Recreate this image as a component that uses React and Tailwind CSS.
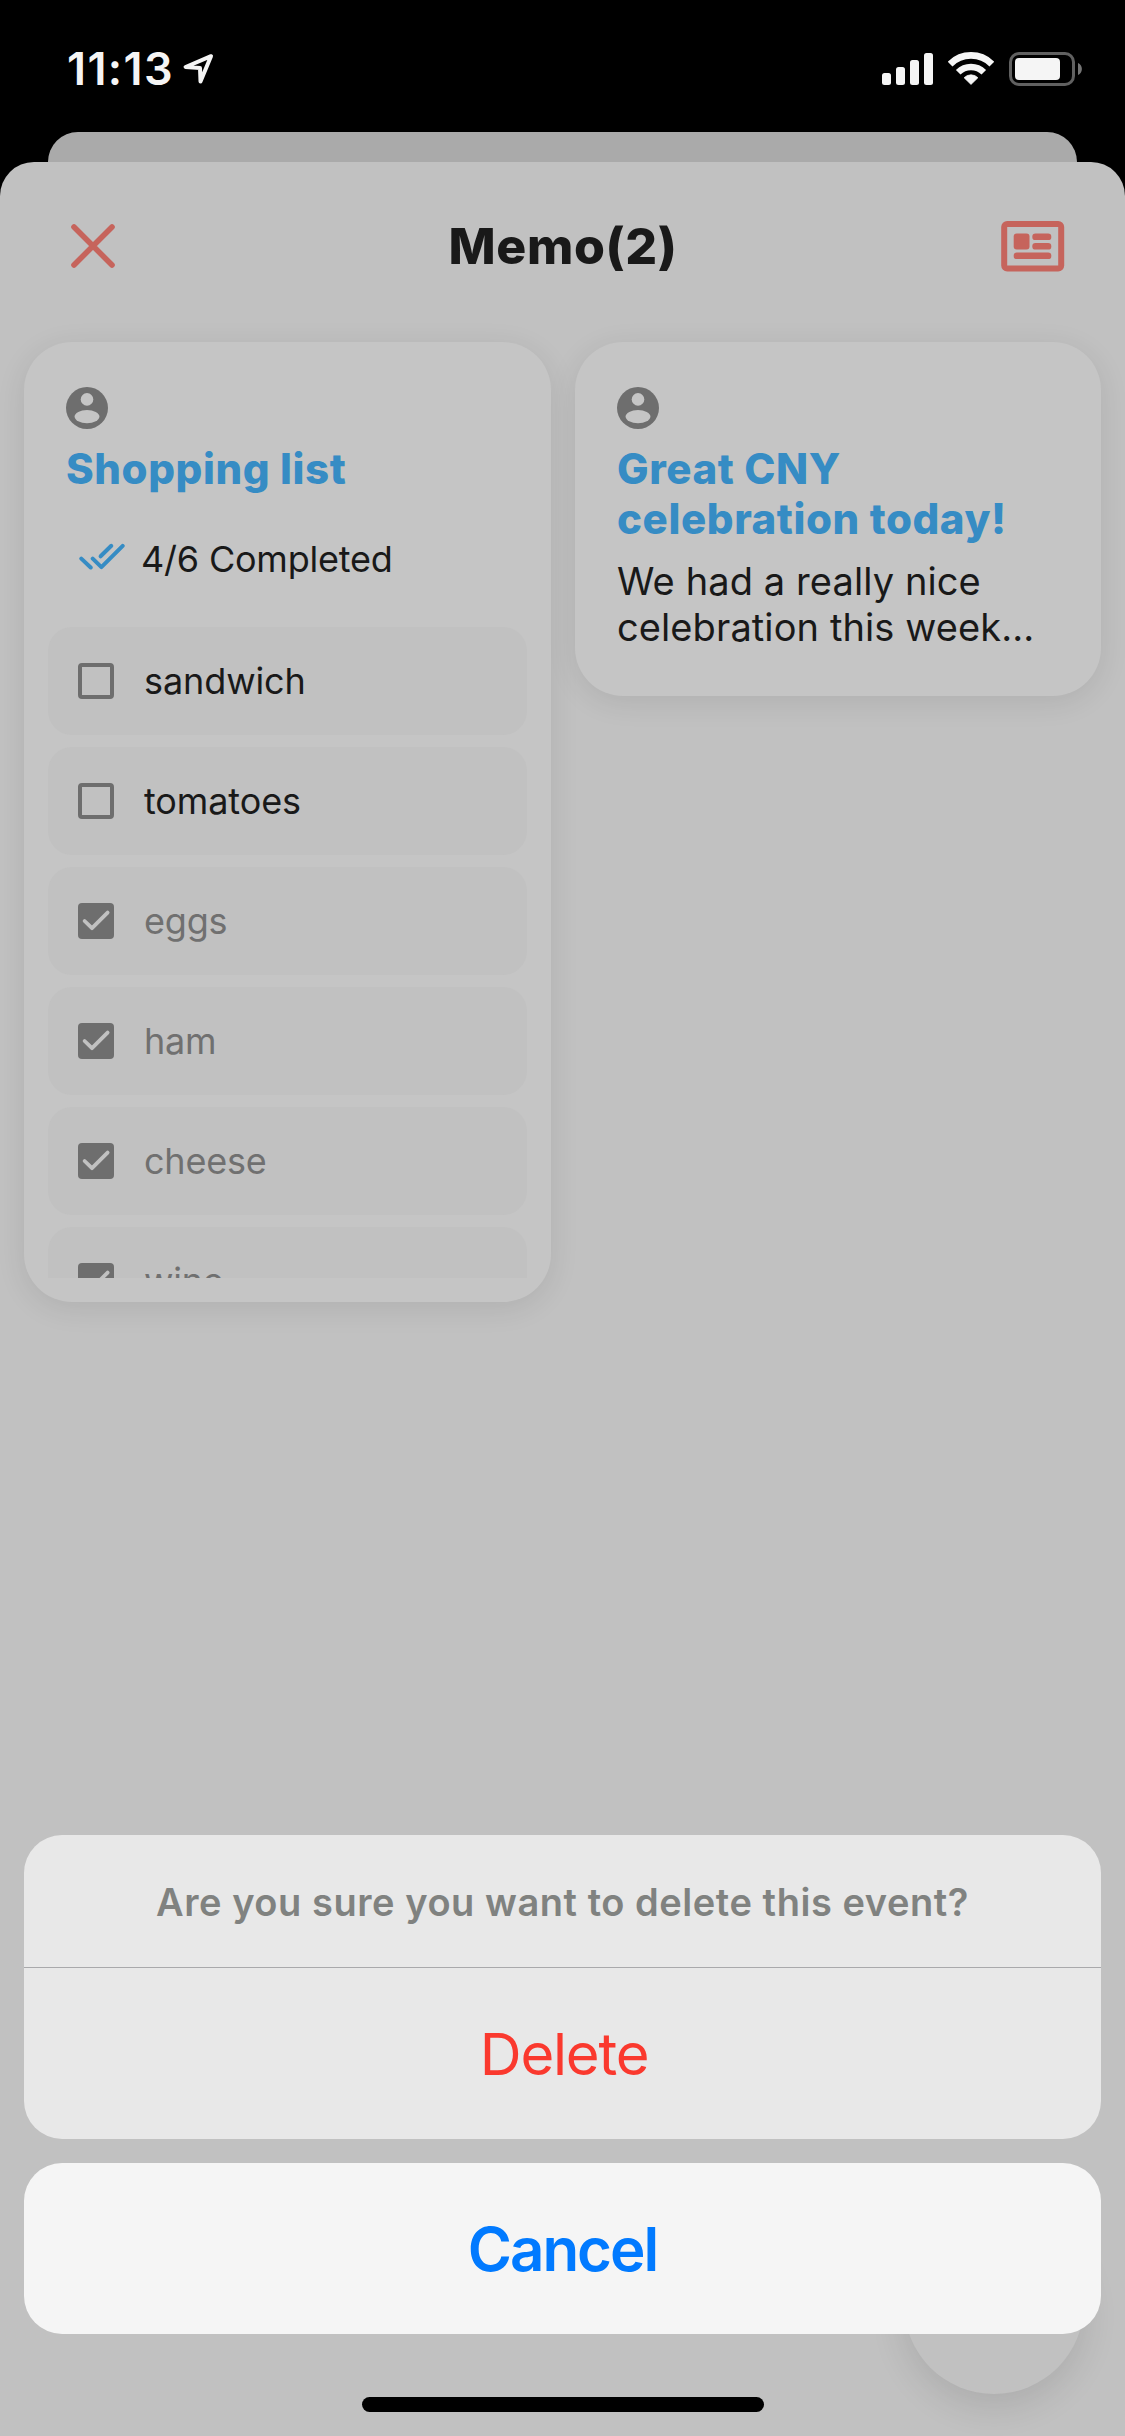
import React from "react";

const ITEMS = [
  { label: "sandwich", done: false },
  { label: "tomatoes", done: false },
  { label: "eggs", done: true },
  { label: "ham", done: true },
  { label: "cheese", done: true },
  { label: "wine", done: true },
];

function LocationArrow() {
  return (
    <svg className="ml-[7px] h-[34px] w-[34px]" viewBox="181 52 34 34" fill="none" stroke="#f5f5f5" strokeWidth="4" strokeLinejoin="round">
      <path d="M211 56.2 L185.6 67 L200 68 L200.5 81.5 Z" />
    </svg>
  );
}

function Signal() {
  return (
    <svg className="h-[34px] w-[51px]" viewBox="882 52 51 34" fill="#f5f5f5">
      <rect x="882" y="73" width="9" height="12" rx="2.5" />
      <rect x="896" y="67" width="9" height="18" rx="2.5" />
      <rect x="910" y="60" width="9" height="25" rx="2.5" />
      <rect x="924" y="53" width="9" height="32" rx="2.5" />
    </svg>
  );
}

function Wifi() {
  return (
    <svg className="ml-[15px] h-[34px] w-[46px]" viewBox="-23 -33 46 34" fill="none" stroke="#f5f5f5">
      <path d="M-20.9 -20.9 A29.6 29.6 0 0 1 20.9 -20.9" strokeWidth="6.8" />
      <path d="M-12.8 -12.8 A18.1 18.1 0 0 1 12.8 -12.8" strokeWidth="6.5" />
      <path d="M0 -0.6 L-6.9 -7.3 A9.8 9.8 0 0 1 6.9 -7.3 Z" fill="#f5f5f5" strokeWidth="0.8" strokeLinejoin="round" />
    </svg>
  );
}

function Battery() {
  return (
    <svg className="ml-[15px] h-[34px] w-[73px]" viewBox="1009 52 73 34">
      <rect x="1010.5" y="53.5" width="63" height="31" rx="8.5" fill="none" stroke="#616161" strokeWidth="3" />
      <rect x="1015" y="58" width="45" height="22" rx="4" fill="#f5f5f5" />
      <path d="M1078 63 C1083.2 65 1083.2 73 1078 75 Z" fill="#757575" />
    </svg>
  );
}

function CloseIcon() {
  return (
    <svg className="h-[46px] w-[46px]" viewBox="0 0 46 46" fill="none" stroke="#c6645c" strokeWidth="5.6" strokeLinecap="round">
      <path d="M4 4 L42 42 M42 4 L4 42" />
    </svg>
  );
}

function NewsIcon() {
  return (
    <svg className="h-[52px] w-[64px]" viewBox="1001 220 64 52" fill="#c6645c">
      <rect x="1004.2" y="224" width="57" height="44.6" rx="3" fill="none" stroke="#c6645c" strokeWidth="6" />
      <rect x="1013.7" y="233.6" width="15.8" height="16" rx="3" />
      <rect x="1032.3" y="233.6" width="19" height="6.5" rx="3.2" />
      <rect x="1032.3" y="243.1" width="19" height="6.5" rx="3.2" />
      <rect x="1013.7" y="252.6" width="37.6" height="6.5" rx="3.2" />
    </svg>
  );
}

function UserIcon() {
  return (
    <svg className="block h-[42px] w-[42px]" viewBox="0 0 42 42">
      <circle cx="21" cy="21" r="21" fill="#6e6e6e" />
      <circle cx="21" cy="12.4" r="6.3" fill="#c5c5c5" />
      <ellipse cx="21" cy="29.6" rx="12.4" ry="6.6" fill="#c5c5c5" />
    </svg>
  );
}

function DoubleCheck() {
  return (
    <svg className="h-[46px] w-[46px]" viewBox="79 536 46 46" fill="none" stroke="#368cc4" strokeWidth="4" strokeLinecap="round" strokeLinejoin="round">
      <path d="M81.3 558.6 L90.7 567.5" />
      <path d="M92.7 558.6 L101.4 567.2 L122.7 545.8" />
      <path d="M100.6 556.3 L111.3 545.8" />
    </svg>
  );
}

function Checkbox({ done }) {
  return done ? (
    <svg className="h-[36px] w-[36px] shrink-0" viewBox="0 0 36 36" fill="none">
      <rect width="36" height="36" rx="4" fill="#6e6e6e" />
      <path d="M6.6 18 L14 25.2 L29.6 9.6" stroke="#c1c1c1" strokeWidth="3.8" strokeLinecap="round" strokeLinejoin="round" />
    </svg>
  ) : (
    <span className="h-[36px] w-[36px] shrink-0 rounded-[4px] border-4 border-[#6e6e6e]" />
  );
}

function Card({ className, title, children }) {
  return (
    <section className={"flex flex-col rounded-[48px] bg-[#c5c5c5] pt-[45px] shadow-[0_6px_30px_rgba(0,0,0,0.09)] " + className}>
      <div className="px-[42px]">
        <UserIcon />
        <h2 className="mt-[15px] text-[42px] leading-[50px] font-extrabold tracking-[0.6px] whitespace-pre-line text-[#368cc4]">{title}</h2>
      </div>
      {children}
    </section>
  );
}

export default function App() {
  return (
    <div className="relative flex h-[2436px] w-[1125px] flex-col overflow-hidden bg-black font-['Inter','Liberation_Sans',sans-serif] text-[#191919]">
      <header className="flex h-[132px] shrink-0 items-start justify-between pt-[52px] pr-[43px] pl-[67px]">
        <div className="flex items-start">
          <span className="text-[45px] leading-[34px] font-semibold tracking-[1.4px] text-[#f5f5f5]">11:13</span>
          <LocationArrow />
        </div>
        <div className="flex items-start">
          <Signal />
          <Wifi />
          <Battery />
        </div>
      </header>

      <div className="mx-[48px] h-[30px] shrink-0 rounded-t-[30px] bg-[#aaaaaa]" />

      <main className="flex grow flex-col rounded-t-[34px] bg-[#c1c1c1]">
        <div className="flex h-[168px] items-center justify-between pr-[60px] pl-[70px]">
          <div className="flex w-[200px]">
            <CloseIcon />
          </div>
          <h1 className="ml-[-9px] text-[50px] leading-[58px] font-extrabold tracking-[0.6px]">Memo(2)</h1>
          <div className="flex w-[200px] justify-end">
            <NewsIcon />
          </div>
        </div>

        <div className="flex items-start gap-[24px] px-[24px] pt-[12px]">
          <Card className="h-[960px] w-[527px] pb-[24px]" title="Shopping list">
            <div className="mt-[42px] flex items-center gap-[16px] pl-[55px]">
              <DoubleCheck />
              <span className="text-[36px] leading-[46px] tracking-[-0.2px]">4/6 Completed</span>
            </div>
            <ul className="mx-[24px] mt-[45px] flex h-[651px] flex-col gap-[12px] overflow-hidden">
              {ITEMS.map((item) => (
                <li key={item.label} className="flex h-[108px] shrink-0 items-center gap-[30px] rounded-[24px] bg-[#c1c1c1] px-[30px]">
                  <Checkbox done={item.done} />
                  <span className={item.done ? "text-[36px] tracking-[-0.2px] text-[#707070]" : "text-[36px] tracking-[-0.1px]"}>{item.label}</span>
                </li>
              ))}
            </ul>
          </Card>

          <Card className="h-[354px] w-[526px]" title={"Great CNY\ncelebration today!"}>
            <p className="mt-[14px] px-[42px] text-[38px] leading-[46px] tracking-[0.1px] whitespace-pre-line">
              {"We had a really nice\ncelebration this week..."}
            </p>
          </Card>
        </div>
      </main>

      {/* Floating action button, partly covered by the action sheet */}
      <div className="absolute right-[41px] bottom-[42px] h-[180px] w-[180px] rounded-full bg-[#c1c1c1] shadow-[0_12px_36px_rgba(0,0,0,0.11)]" />

      <div className="absolute inset-x-[24px] bottom-[24px] flex flex-col items-center text-center">
        <div className="w-full overflow-hidden rounded-[38px] bg-[#e8e8e8]">
          <p className="h-[133px] border-b border-[#a9a9ab] pt-[2px] text-[38px] leading-[130px] font-semibold tracking-[0.55px] text-[#808280]">
            Are you sure you want to delete this event?
          </p>
          <button className="block h-[171px] w-full pl-[3px] text-[58px] leading-[172px] tracking-[-1.2px] text-[#fa392e]">Delete</button>
        </div>
        <button className="mt-[24px] block h-[171px] w-full rounded-[38px] bg-[#f5f5f5] text-[60px] leading-[172px] font-semibold tracking-[-2px] text-[#017aff]">
          Cancel
        </button>
        <div className="mt-[63px] h-[15px] w-[402px] rounded-full bg-black" />
      </div>
    </div>
  );
}
